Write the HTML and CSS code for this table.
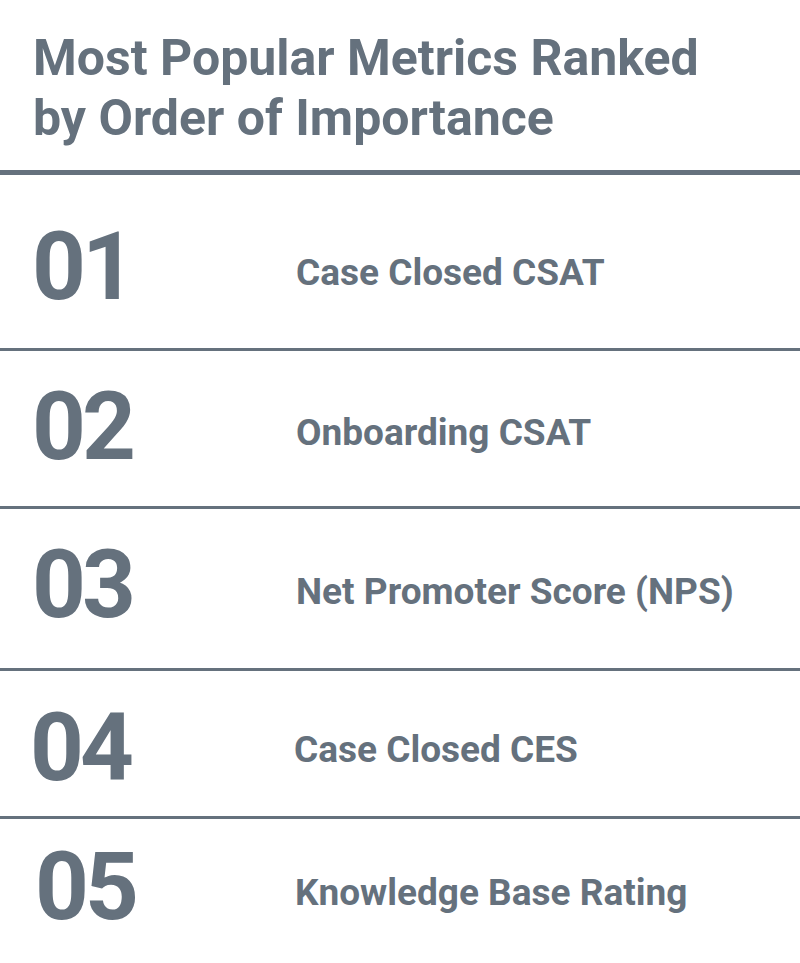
FILE: index.html
```html
<!DOCTYPE html>
<html lang="en">
<head>
<meta charset="utf-8">
<title>Most Popular Metrics Ranked by Order of Importance</title>
<link rel="stylesheet" href="styles.css">
</head>
<body>
<main class="panel">
  <h1 class="title">Most Popular Metrics Ranked<br>by Order of Importance</h1>
  <ol class="ranking">
    <li class="row row-1"><span class="num">01</span><span class="label">Case Closed CSAT</span></li>
    <li class="row row-2"><span class="num">02</span><span class="label">Onboarding CSAT</span></li>
    <li class="row row-3"><span class="num">03</span><span class="label">Net Promoter Score (NPS)</span></li>
    <li class="row row-4"><span class="num">04</span><span class="label">Case Closed CES</span></li>
    <li class="row row-5"><span class="num">05</span><span class="label">Knowledge Base Rating</span></li>
  </ol>
</main>
</body>
</html>
```

FILE: styles.css
```css
html, body {
  margin: 0;
  padding: 0;
  background: #ffffff;
}

body {
  font-family: Roboto, "Noto Sans", "Liberation Sans", sans-serif;
  color: #65717d;
}

.panel {
  width: 800px;
}

.title {
  margin: 0;
  padding: 28px 0 22px 33px;
  font-size: 50px;
  line-height: 60px;
  font-weight: 700;
  border-bottom: 5px solid #65717d;
}

.ranking {
  list-style: none;
  margin: 0;
  padding: 0;
}

.row {
  display: flex;
  align-items: center;
  box-sizing: content-box;
  border-bottom: 3px solid #65717d;
}

.row-1 { height: 163px; padding-top: 10px; }
.row-2 { height: 151px; padding-bottom: 4px; }
.row-3 { height: 152px; padding-bottom: 7px; }
.row-4 { height: 137px; padding-top: 8px; }
.row-5 { height: 135px; padding-bottom: 9px; border-bottom: none; }

.num {
  flex: 0 0 auto;
  width: 264px;
  padding-left: 32px;
  font-size: 94px;
  line-height: 1;
  font-weight: 700;
  letter-spacing: -4px;
}

.label {
  margin-top: 14px;
  font-size: 37px;
  font-weight: 700;
  line-height: 1.2;
}

.row-4 .num { padding-left: 30px; }
.row-4 .label { margin-top: 6px; }
.row-5 .num { padding-left: 35px; width: 260px; }
```
